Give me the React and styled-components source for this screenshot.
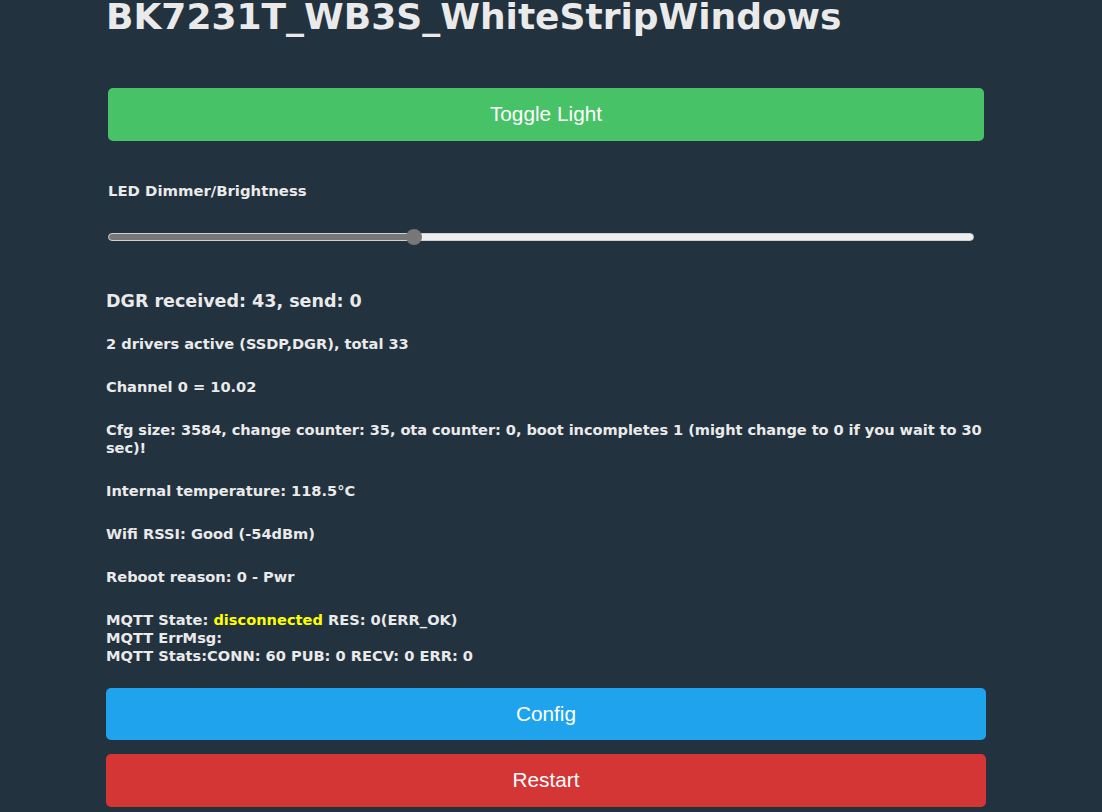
import React, { useState } from "react";
import styled, { createGlobalStyle } from "styled-components";

const GlobalStyle = createGlobalStyle`
  html, body {
    margin: 0;
    padding: 0;
    background: #22323f;
  }
  body {
    font-family: "DejaVu Sans", Verdana, sans-serif;
    color: #eaeaea;
    overflow: hidden;
  }
`;

const Page = styled.div`
  width: 880px;
  padding-left: 106px;
  padding-bottom: 40px;
`;

const Title = styled.h1`
  margin: -4px 0 0;
  font-size: 36px;
  font-weight: bold;
  line-height: normal;
  color: #eaeaea;
`;

const Controls = styled.div`
  padding: 0 2px;
  margin-top: 51px;
`;

const Button = styled.button`
  display: block;
  width: 100%;
  height: ${(p) => p.$h || 53}px;
  border: 0;
  border-radius: 5px;
  background: ${(p) => p.$bg};
  color: #fff;
  font-family: "Liberation Sans", Arial, sans-serif;
  font-size: 20.8px;
  line-height: 1;
  cursor: pointer;
  margin-top: ${(p) => p.$mt || 0}px;
`;

const Label = styled.div`
  margin-top: 41px;
  font-size: 14.85px;
  font-weight: bold;
  line-height: 18px;
`;

const Range = styled.input`
  -webkit-appearance: none;
  appearance: none;
  display: block;
  width: 866px;
  height: 8px;
  margin: 33px 0 0;
  border-radius: 4px;
  border: 1px solid #d0d0d0;
  box-sizing: border-box;
  outline: none;

  &::-webkit-slider-thumb {
    -webkit-appearance: none;
    appearance: none;
    width: 16px;
    height: 16px;
    border-radius: 50%;
    background: #777;
    border: 0;
    cursor: pointer;
  }
`;

const Info = styled.div`
  margin-top: 50px;
`;

const Heading = styled.h5`
  margin: 0 0 -1px;
  font-size: 17.5px;
  font-weight: bold;
  line-height: 20px;
`;

const Line = styled.p`
  margin: 25px 0 0;
  font-size: 14.6px;
  font-weight: bold;
  line-height: 18px;
  letter-spacing: ${(p) => (p.$tight ? "-0.07px" : "normal")};
`;

const Yellow = styled.span`
  color: #ffff00;
`;

export default function App() {
  const [value, setValue] = useState(35);
  const fill = `linear-gradient(to right, #777 0%, #777 ${value}%, #eee ${value}%, #eee 100%)`;

  return (
    <Page>
      <GlobalStyle />
      <Title>BK7231T_WB3S_WhiteStripWindows</Title>
      <Controls>
        <Button $bg="#47c266">Toggle Light</Button>
        <Label>LED Dimmer/Brightness</Label>
        <Range
          type="range"
          min="0"
          max="100"
          value={value}
          onChange={(e) => setValue(Number(e.target.value))}
          style={{ background: fill }}
        />
      </Controls>
      <Info>
        <Heading>DGR received: 43, send: 0</Heading>
        <Line>2 drivers active (SSDP,DGR), total 33</Line>
        <Line>Channel 0 = 10.02</Line>
        <Line $tight>
          Cfg size: 3584, change counter: 35, ota counter: 0, boot incompletes 1 (might change to 0 if you wait to 30 sec)!
        </Line>
        <Line>Internal temperature: 118.5°C</Line>
        <Line>Wifi RSSI: Good (-54dBm)</Line>
        <Line>Reboot reason: 0 - Pwr</Line>
        <Line>
          MQTT State: <Yellow>disconnected</Yellow> RES: 0(ERR_OK)
          <br />
          MQTT ErrMsg:
          <br />
          MQTT Stats:CONN: 60 PUB: 0 RECV: 0 ERR: 0
        </Line>
      </Info>
      <Button $bg="#1fa3ec" $mt={23} $h={52}>
        Config
      </Button>
      <Button $bg="#d43535" $mt={14}>
        Restart
      </Button>
    </Page>
  );
}
